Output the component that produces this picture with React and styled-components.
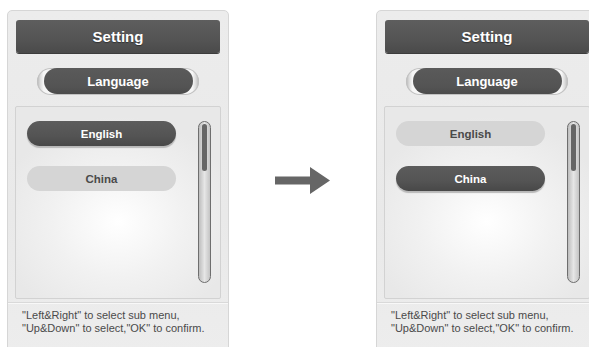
import styled, { createGlobalStyle } from "styled-components";

//////////////////////////////////////////////////////////////////////////////////////
// <<<... [ Constants ] ...>>>
///////////////////////////////////////////////////

const dark = "#545454";
const darkEdge = "#3c3c3c";
const light = "#d5d5d5";
const textGrey = "#4a4a4a";
const font = `"Liberation Sans", Arial, sans-serif`;

//////////////////////////////////////////////////////////////////////////////////////
// <<<... [ Styles ] ...>>>
///////////////////////////////////////////////////

const Global = createGlobalStyle`
	html, body {
		margin: 0;
		padding: 0;
		background: #ffffff;
		font-family: ${font};
	}
`;

const Page = styled.div`
	width: 589px;
	height: 347px;
	overflow: hidden;
	display: flex;
	align-items: flex-start;
	gap: 46px;
	padding-left: 7px;
	box-sizing: border-box;
`;

const Panel = styled.div`
	flex: none;
	width: 222px;
	height: 345px;
	margin-top: 10px;
	box-sizing: border-box;
	padding: 9px 8px 0 8px;
	border: 1px solid #d6d6d6;
	border-radius: 5px 5px 0 0;
	background: linear-gradient(180deg, #ececec 0%, #e9e9e9 60%, #ededed 100%);
	display: flex;
	flex-direction: column;
`;

const Header = styled.div`
	height: 33px;
	border-radius: 3px;
	background: linear-gradient(180deg, #5e5e5e 0%, ${dark} 60%, #4a4a4a 100%);
	box-shadow: 0 1px 0 ${darkEdge};
	color: #ffffff;
	font-weight: bold;
	font-size: 15px;
	display: flex;
	align-items: center;
	justify-content: center;
	text-shadow: 0 1px 1px rgba(0, 0, 0, 0.4);
`;

const TabRow = styled.div`
	margin-top: 15px;
	display: flex;
	justify-content: center;
`;

const TabRing = styled.div`
	width: 162px;
	height: 27px;
	border-radius: 14px;
	background: linear-gradient(
		90deg,
		#b4b4b4 0%,
		#dcdcdc 2%,
		#f6f6f6 4%,
		#f6f6f6 96%,
		#dcdcdc 98%,
		#b4b4b4 100%
	);
	box-shadow: inset 0 0 0 1px #c2c2c2;
	display: flex;
	justify-content: center;
`;

const Tab = styled.div`
	width: 149px;
	height: 26px;
	border-radius: 13px;
	background: linear-gradient(180deg, #5a5a5a 0%, ${dark} 70%, #4c4c4c 100%);
	color: #ffffff;
	font-weight: bold;
	font-size: 13px;
	display: flex;
	align-items: center;
	justify-content: center;
`;

const ListBox = styled.div`
	margin: 11px -1px 0 -1px;
	height: 193px;
	box-sizing: border-box;
	border: 1px solid #d2d2d2;
	border-radius: 2px;
	background: radial-gradient(ellipse 60% 55% at 50% 60%, #ffffff 0%, #f1f1f1 55%, #e8e8e8 100%);
	display: flex;
	padding: 14px 9px 0 11px;
	justify-content: space-between;
`;

const Options = styled.div`
	display: flex;
	flex-direction: column;
	gap: 20px;
`;

const Option = styled.div`
	width: 149px;
	height: 25px;
	border-radius: 13px;
	display: flex;
	align-items: center;
	justify-content: center;
	font-weight: bold;
	font-size: 11.5px;
	background: ${(p) =>
		p.active ? `linear-gradient(180deg, #5c5c5c 0%, ${dark} 60%, #484848 100%)` : light};
	color: ${(p) => (p.active ? "#ffffff" : textGrey)};
	box-shadow: ${(p) => (p.active ? `0 2px 1px #b8b8b8` : "none")};
`;

const ScrollTrack = styled.div`
	width: 13px;
	height: 162px;
	box-sizing: border-box;
	border: 1px solid #6e6e6e;
	border-radius: 7px;
	background: linear-gradient(90deg, #bdbdbd 0%, #e6e6e6 50%, #c4c4c4 100%);
	display: flex;
	justify-content: center;
	padding-top: 2px;
`;

const ScrollThumb = styled.div`
	width: 5px;
	height: 47px;
	border-radius: 3px;
	background: #666666;
`;

const Footer = styled.div`
	margin: 3px -8px 0 -8px;
	border-top: 1px solid #d9d9d9;
	box-shadow: inset 0 1px 0 #f8f8f8;
	padding: 6px 0 0 14px;
	font-size: 11px;
	line-height: 13px;
	color: ${textGrey};
`;

const ArrowSlot = styled.div`
	flex: none;
	margin-top: 167px;
	width: 55px;
	height: 27px;
`;

//////////////////////////////////////////////////////////////////////////////////////
// <<<... [ Subcomponents ] ...>>>
///////////////////////////////////////////////////

const Arrow = () => (
	<ArrowSlot>
		<svg width="55" height="27" viewBox="0 0 55 27">
			<path d="M0 9.5h35V0l20 13.5L35 27v-9.5H0z" fill="#666666" />
		</svg>
	</ArrowSlot>
);

const SettingPanel = ({ selected }) => (
	<Panel>
		<Header>Setting</Header>
		<TabRow>
			<TabRing>
				<Tab>Language</Tab>
			</TabRing>
		</TabRow>
		<ListBox>
			<Options>
				<Option active={selected === "English"}>English</Option>
				<Option active={selected === "China"}>China</Option>
			</Options>
			<ScrollTrack>
				<ScrollThumb />
			</ScrollTrack>
		</ListBox>
		<Footer>
			"Left&amp;Right" to select sub menu,
			<br />
			"Up&amp;Down" to select,"OK" to confirm.
		</Footer>
	</Panel>
);

//////////////////////////////////////////////////////////////////////////////////////
// <<<... [ App ] ...>>>
///////////////////////////////////////////////////

const App = () => (
	<>
		<Global />
		<Page>
			<SettingPanel selected="English" />
			<Arrow />
			<SettingPanel selected="China" />
		</Page>
	</>
);

export default App;
